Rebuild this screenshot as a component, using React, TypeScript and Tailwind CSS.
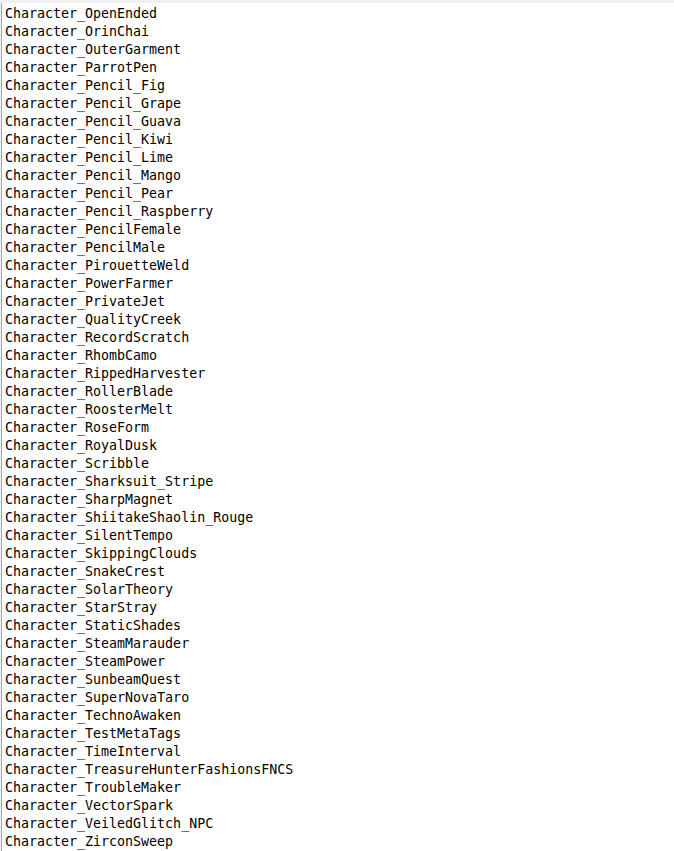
const names = [
  "OpenEnded",
  "OrinChai",
  "OuterGarment",
  "ParrotPen",
  "Pencil_Fig",
  "Pencil_Grape",
  "Pencil_Guava",
  "Pencil_Kiwi",
  "Pencil_Lime",
  "Pencil_Mango",
  "Pencil_Pear",
  "Pencil_Raspberry",
  "PencilFemale",
  "PencilMale",
  "PirouetteWeld",
  "PowerFarmer",
  "PrivateJet",
  "QualityCreek",
  "RecordScratch",
  "RhombCamo",
  "RippedHarvester",
  "RollerBlade",
  "RoosterMelt",
  "RoseForm",
  "RoyalDusk",
  "Scribble",
  "Sharksuit_Stripe",
  "SharpMagnet",
  "ShiitakeShaolin_Rouge",
  "SilentTempo",
  "SkippingClouds",
  "SnakeCrest",
  "SolarTheory",
  "StarStray",
  "StaticShades",
  "SteamMarauder",
  "SteamPower",
  "SunbeamQuest",
  "SuperNovaTaro",
  "TechnoAwaken",
  "TestMetaTags",
  "TimeInterval",
  "TreasureHunterFashionsFNCS",
  "TroubleMaker",
  "VectorSpark",
  "VeiledGlitch_NPC",
  "ZirconSweep",
];

export default function App() {
  return (
    <div className="w-[674px] h-[851px] overflow-hidden bg-white flex flex-col">
      <div className="h-[3px] bg-[#f0f0f0] shrink-0" />
      <div className="flex flex-1">
        <div className="w-px bg-[#f0f0f0]" />
        <div className="w-px bg-[#a0a8b4]" />
        <div className="pl-[3px] pt-[2px] font-['DejaVu_Sans_Mono',monospace] text-[13.3px] leading-[18px] text-black">
          {names.map((n) => (
            <div key={n} className="whitespace-pre">
              Character_{n}
            </div>
          ))}
        </div>
      </div>
    </div>
  );
}
